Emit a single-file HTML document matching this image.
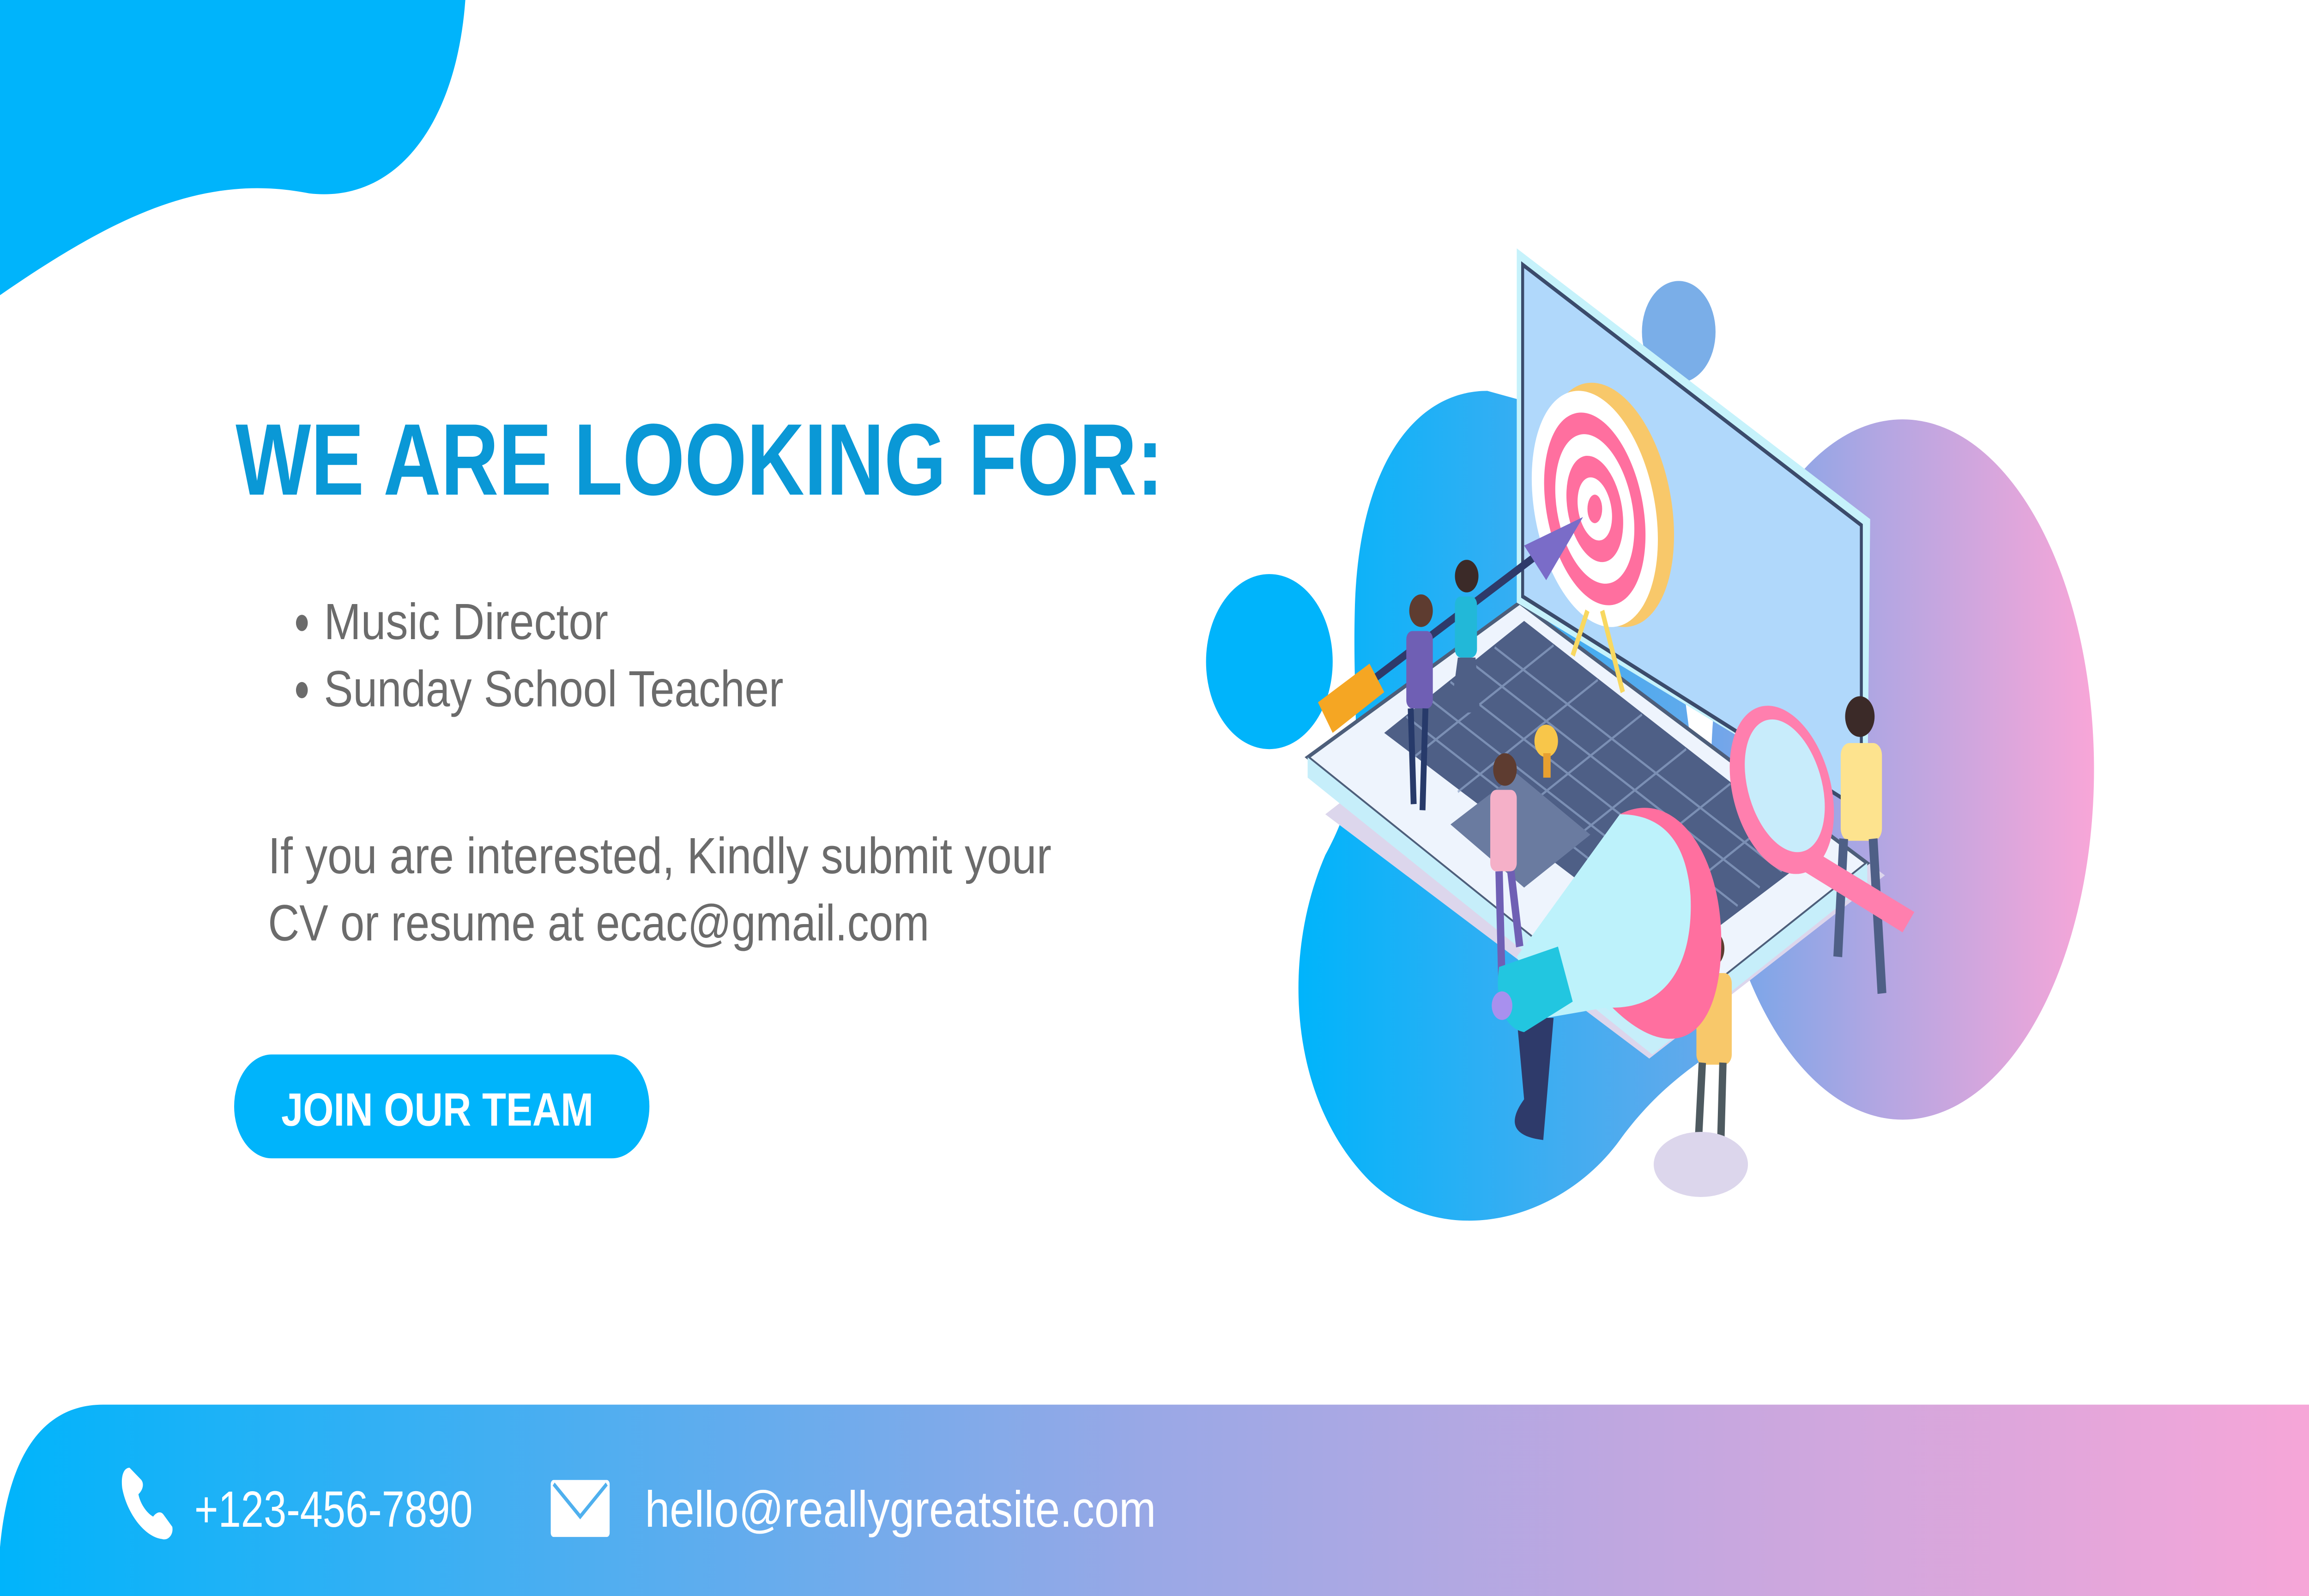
<!DOCTYPE html>
<html><head><meta charset="utf-8"><style>
html,body{margin:0;padding:0;background:#fff;overflow:hidden;width:100%;height:100%}
svg{display:block;position:fixed;left:0;top:0;width:100vw;height:100vh}
text{font-family:"Liberation Sans",sans-serif}
</style></head><body>
<svg viewBox="0 0 1568 784" preserveAspectRatio="none" xmlns="http://www.w3.org/2000/svg">
<defs>
<linearGradient id="foot" x1="0" x2="1" y1="0" y2="0">
<stop offset="0" stop-color="#00b4fb"/><stop offset="0.5" stop-color="#9aa8e6"/><stop offset="1" stop-color="#f6a6d8"/>
</linearGradient>
<linearGradient id="pinkb" x1="0" x2="1" y1="0" y2="0">
<stop offset="0" stop-color="#6ea6ea"/><stop offset="0.45" stop-color="#b4a6e2"/><stop offset="1" stop-color="#f8a6d8"/>
</linearGradient>
<linearGradient id="blueb" x1="0" x2="1" y1="0" y2="0">
<stop offset="0" stop-color="#00b4fb"/><stop offset="1" stop-color="#6aa8ea"/>
</linearGradient>
</defs>
<rect width="1568" height="784" fill="#fff"/>
<path d="M0 0 H316 C310 60 270 100 210 95 C140 85 80 105 0 145 Z" fill="#00b4fb"/>
<text x="160" y="243" font-size="50" font-weight="bold" fill="#0a98d6" textLength="630" lengthAdjust="spacingAndGlyphs">WE ARE LOOKING FOR:</text>
<g fill="#6b6b6b" font-size="25">
<circle cx="205" cy="306" r="4"/><circle cx="205" cy="339" r="4"/>
<text x="220" y="314" textLength="193" lengthAdjust="spacingAndGlyphs">Music Director</text>
<text x="220" y="347" textLength="312" lengthAdjust="spacingAndGlyphs">Sunday School Teacher</text>
<text x="182" y="429" textLength="532" lengthAdjust="spacingAndGlyphs">If you are interested, Kindly submit your</text>
<text x="182" y="462" textLength="449" lengthAdjust="spacingAndGlyphs">CV or resume at ecac@gmail.com</text>
</g>
<rect x="159" y="518" width="282" height="51" rx="25.5" fill="#00b4fb"/>
<text x="191" y="553" font-size="23" font-weight="bold" fill="#fff" textLength="212" lengthAdjust="spacingAndGlyphs">JOIN OUR TEAM</text>
<path d="M0 784 V760 C5 720 25 690 70 690 H1568 V784 Z" fill="url(#foot)"/>
<path d="M88 721 C84 721 82 725 83 731 C86 743 98 755 110 756 C114 757 118 754 117 750 L111 744 C109 742 106 743 104 745 C99 743 95 738 94 734 C97 732 98 729 96 727 Z" fill="#fff"/>
<text x="132" y="750" font-size="25" fill="#fff" textLength="189" lengthAdjust="spacingAndGlyphs">+123-456-7890</text>
<rect x="374" y="727" width="40" height="28" rx="2" fill="#fff"/>
<path d="M376 729 L394 745 L412 729" fill="none" stroke="#4fb0ee" stroke-width="2"/>
<text x="438" y="750" font-size="25" fill="#fff" textLength="347" lengthAdjust="spacingAndGlyphs">hello@reallygreatsite.com</text>
<ellipse cx="1292" cy="378" rx="130" ry="172" fill="url(#pinkb)"/>
<circle cx="1140" cy="163" r="25" fill="#7aaee8"/>
<path d="M1010 192 C960 192 922 230 920 300 C918 360 930 380 900 420 C870 470 875 540 930 580 C980 615 1060 600 1100 560 C1130 530 1160 520 1175 510 L1140 320 L1050 200 Z" fill="url(#blueb)"/>
<circle cx="862" cy="325" r="43" fill="#00b4fb"/>
<path d="M900 400 L1120 520 L1280 430 L1060 310 Z" fill="#dcd6ec"/>
<path d="M888 372 L1032 296 L1268 424 L1122 508 Z" fill="#eef4fd" stroke="#4d5e7a" stroke-width="2"/>
<path d="M888 372 L888 382 L1122 518 L1268 434 L1268 424 L1122 508 Z" fill="#c6eefa"/>
<path d="M940 360 L1035 305 L1235 418 L1140 470 Z" fill="#4e5f86"/>
<g stroke="#8ea4c8" stroke-width="1.2" opacity="0.7">
<path d="M955 352 L1150 462 M970 343 L1165 453 M985 335 L1180 445 M1000 326 L1195 436 M1015 318 L1210 428"/>
<path d="M960 372 L1055 317 M990 389 L1085 334 M1020 406 L1115 351 M1050 423 L1145 368 M1080 440 L1175 385 M1110 457 L1205 402"/>
</g>
<path d="M985 405 L1030 380 L1080 410 L1035 436 Z" fill="#6a7ba0"/>
<path d="M1030 122 L1270 255 L1268 400 L1030 296 Z" fill="#c6f2fb"/>
<path d="M1034 130 L1264 258 L1264 398 L1034 293 Z" fill="#b0d8fb" stroke="#3b4b6b" stroke-width="2"/>
<ellipse cx="1092" cy="248" rx="42" ry="62" transform="rotate(-20 1092 248)" fill="#f8c86a"/>
<ellipse cx="1083" cy="250" rx="40" ry="60" transform="rotate(-20 1083 250)" fill="#fff"/>
<ellipse cx="1083" cy="250" rx="32" ry="49" transform="rotate(-20 1083 250)" fill="#ff6f9f"/>
<ellipse cx="1083" cy="250" rx="25" ry="38" transform="rotate(-20 1083 250)" fill="#fff"/>
<ellipse cx="1083" cy="250" rx="18" ry="27" transform="rotate(-20 1083 250)" fill="#ff6f9f"/>
<ellipse cx="1083" cy="250" rx="11" ry="16" transform="rotate(-20 1083 250)" fill="#fff"/>
<ellipse cx="1083" cy="250" rx="5" ry="7" fill="#ff6f9f"/>
<path d="M1078 300 L1068 322 M1088 300 L1102 340" stroke="#f8d860" stroke-width="3"/>
<path d="M912 345 L1045 272" stroke="#2e3a6a" stroke-width="4"/>
<path d="M1035 268 L1075 254 L1050 285 Z" fill="#7a6cc8"/>
<path d="M895 345 L930 326 L940 340 L905 360 Z" fill="#f5a623"/>
<g>
<circle cx="965" cy="300" r="8" fill="#5e3c30"/><rect x="955" y="310" width="18" height="38" rx="4" fill="#6f5fb4"/><path d="M958 348 L960 395 M968 348 L966 398" stroke="#273a6a" stroke-width="4"/>
<circle cx="996" cy="283" r="8" fill="#3b2a28"/><rect x="988" y="293" width="15" height="30" rx="4" fill="#22b8d8"/><path d="M990 323 L985 350 L1005 350 L1002 323 Z" fill="#4e5f86"/>
<circle cx="1022" cy="378" r="8" fill="#5e3c30"/><rect x="1012" y="388" width="18" height="40" rx="4" fill="#f5b0c8"/><path d="M1018 428 L1020 485 M1026 428 L1032 465" stroke="#6f5fb4" stroke-width="5"/>
<circle cx="1263" cy="352" r="10" fill="#3b2a28"/><rect x="1250" y="365" width="28" height="48" rx="6" fill="#fde38e"/><path d="M1252 412 L1248 470 M1272 412 L1278 488" stroke="#4e5f86" stroke-width="6"/>
<circle cx="1162" cy="466" r="9" fill="#5e3c30"/><rect x="1152" y="478" width="24" height="45" rx="5" fill="#f8c86a"/><path d="M1156 522 L1152 580 M1170 522 L1168 576" stroke="#4e5a60" stroke-width="5"/>
<ellipse cx="1155" cy="572" rx="32" ry="16" fill="#dcd6ec"/>
</g>
<circle cx="1050" cy="364" r="8" fill="#f8c64a"/><rect x="1048" y="370" width="5" height="12" fill="#e8a030"/>
<ellipse cx="1210" cy="388" rx="32" ry="44" transform="rotate(-30 1210 388)" fill="#ff7fae"/>
<ellipse cx="1212" cy="386" rx="24" ry="35" transform="rotate(-30 1212 386)" fill="#c8ecfb"/>
<path d="M1232 418 L1300 448 L1292 458 L1225 428 Z" fill="#ff7fae"/>
<path d="M1035 540 C1025 550 1025 558 1048 560 L1055 500 L1030 500 Z" fill="#2e3a6a"/>
<path d="M1030 470 L1100 400 C1140 390 1170 420 1165 470 C1160 510 1130 515 1090 495 L1050 500 Z" fill="#bdf2fb"/>
<path d="M1100 400 C1140 385 1175 425 1168 475 C1162 515 1130 520 1095 495 C1135 495 1150 470 1148 440 C1145 410 1125 400 1100 400 Z" fill="#ff6f9f"/>
<path d="M1018 475 C1015 490 1020 505 1035 507 L1068 492 L1058 465 Z" fill="#22c6e0"/>
<circle cx="1020" cy="494" r="7" fill="#a890ee"/>
</svg>
</body></html>
